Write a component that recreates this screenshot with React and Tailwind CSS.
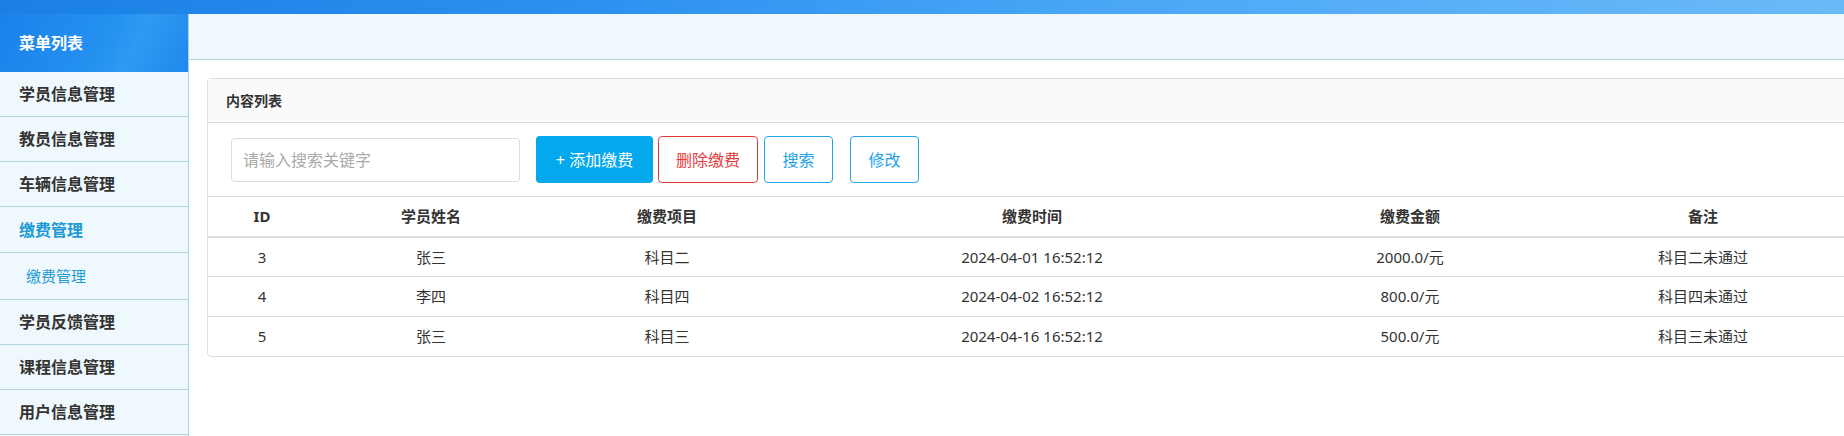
const menu = [
  { label: "学员信息管理" },
  { label: "教员信息管理" },
  { label: "车辆信息管理" },
  { label: "缴费管理", active: true },
  { label: "缴费管理", sub: true },
  { label: "学员反馈管理" },
  { label: "课程信息管理" },
  { label: "用户信息管理" },
];

const rows = [
  { id: 3, name: "张三", item: "科目二", time: "2024-04-01 16:52:12", amount: "2000.0/元", note: "科目二未通过" },
  { id: 4, name: "李四", item: "科目四", time: "2024-04-02 16:52:12", amount: "800.0/元", note: "科目四未通过" },
  { id: 5, name: "张三", item: "科目三", time: "2024-04-16 16:52:12", amount: "500.0/元", note: "科目三未通过" },
];

function Sidebar() {
  return (
    <aside className="w-[189px] shrink-0 bg-[#eff8fc] border-r border-[#b3d3df]">
      <div className="h-[58px] flex items-center pl-[19px] text-white text-base font-bold bg-[linear-gradient(115deg,#1b82ea_0%,#2491f0_55%,#2f9af2_70%,#1f88ec_100%)]">
        菜单列表
      </div>
      {menu.map((m, i) => (
        <div
          key={i}
          className={
            m.sub
              ? "h-[47px] flex items-center pl-[26px] text-[15px] text-[#1f9ad8] border-b border-[#b3d3df]"
              : m.active
              ? "h-[46px] flex items-center pl-[19px] text-base font-semibold text-[#1a9ad6] border-b border-[#b3d3df]"
              : "h-[45px] flex items-center pl-[19px] text-base font-semibold text-[#333] border-b border-[#b3d3df]"
          }
        >
          {m.label}
        </div>
      ))}
    </aside>
  );
}

function Toolbar() {
  return (
    <div className="flex items-center h-[73px] pl-[23px]">
      <div className="w-[289px] h-[44px] border border-[#dcdcdc] rounded flex items-center px-[11px] text-base text-[#aaa]">
        请输入搜索关键字
      </div>
      <button className="ml-[16px] w-[117px] h-[47px] rounded bg-[#03a9ec] text-white text-base">+ 添加缴费</button>
      <button className="ml-[5px] w-[100px] h-[47px] rounded border border-[#e8393a] text-[#e8393a] text-base">删除缴费</button>
      <button className="ml-[6px] w-[69px] h-[47px] rounded border border-[#22a3e6] text-[#22a3e6] text-base">搜索</button>
      <button className="ml-[17px] w-[69px] h-[47px] rounded border border-[#22a3e6] text-[#22a3e6] text-base">修改</button>
    </div>
  );
}

function PayTable() {
  return (
    <table className="w-full table-fixed text-[15px] text-[#333]">
      <colgroup>
        <col className="w-[108px]" />
        <col className="w-[230px]" />
        <col className="w-[242px]" />
        <col className="w-[488px]" />
        <col className="w-[268px]" />
        <col className="w-[318px]" />
      </colgroup>
      <thead>
        <tr className="h-[40px] border-t border-b-2 border-[#dddddd]">
          <th className="font-bold">ID</th>
          <th className="font-bold">学员姓名</th>
          <th className="font-bold">缴费项目</th>
          <th className="font-bold">缴费时间</th>
          <th className="font-bold">缴费金额</th>
          <th className="font-bold">备注</th>
        </tr>
      </thead>
      <tbody>
        {rows.map((r, i) => (
          <tr key={r.id} className={i < rows.length - 1 ? "h-[40px] border-b border-[#dddddd]" : "h-[39px]"}>
            <td className="text-center">{r.id}</td>
            <td className="text-center">{r.name}</td>
            <td className="text-center">{r.item}</td>
            <td className="text-center">{r.time}</td>
            <td className="text-center">{r.amount}</td>
            <td className="text-center">{r.note}</td>
          </tr>
        ))}
      </tbody>
    </table>
  );
}

export default function App() {
  return (
    <div className="w-[1844px] h-[436px] overflow-hidden flex flex-col bg-white font-['Noto_Sans','Noto_Sans_CJK_SC',sans-serif] leading-normal">
      <div className="h-[14px] shrink-0 bg-[linear-gradient(90deg,#1a80e4_0%,#2a8ff0_30%,#4aa7f6_60%,#6bbaf8_100%)]" />
      <div className="flex flex-1 min-h-0">
        <Sidebar />
        <main className="flex-1 min-w-0 overflow-hidden">
          <div className="h-[46px] bg-[#eff8fc] border-b border-[#b3d3df]" />
          <div className="pl-[18px] pt-[18px]">
            <div className="w-[1654px] border border-[#dddddd] rounded">
              <div className="h-[44px] flex items-center pl-[18px] bg-[#fafafa] border-b border-[#dddddd] text-[14px] font-bold text-[#333]">
                内容列表
              </div>
              <Toolbar />
              <PayTable />
            </div>
          </div>
        </main>
      </div>
    </div>
  );
}
